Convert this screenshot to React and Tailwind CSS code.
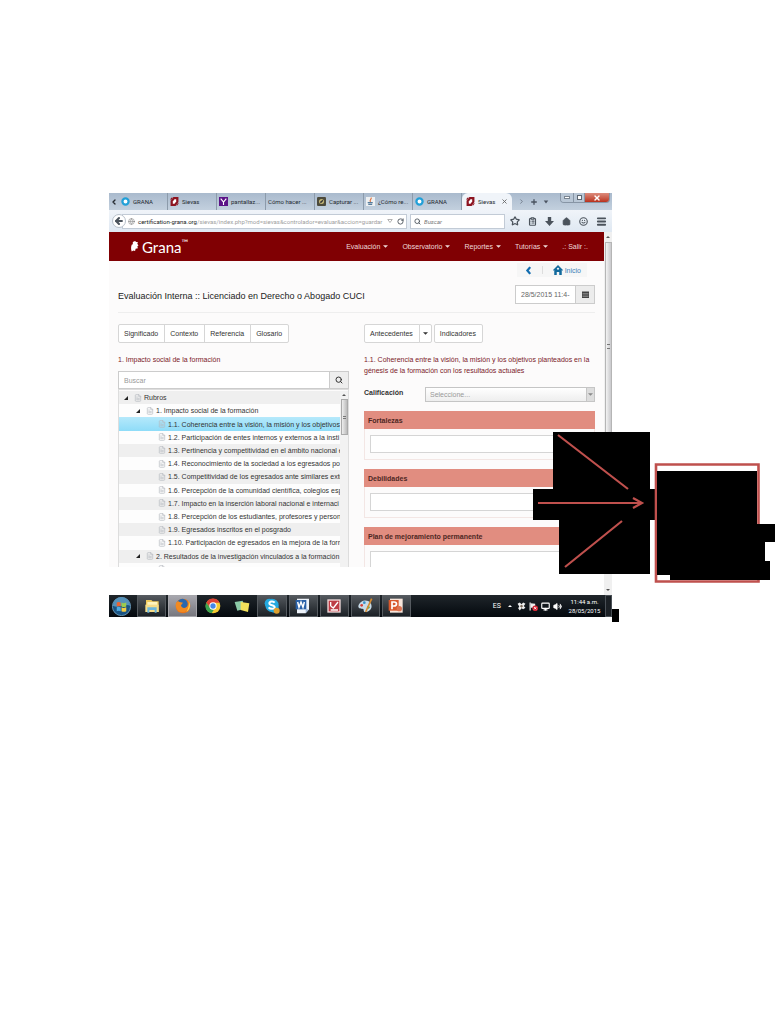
import React from "react";
import { Star, ClipboardList, House, Smile, Menu, ArrowLeft, Globe, Search, FileText, ChevronLeft, ChevronRight, Plus, X, RotateCw, Volume2, Monitor } from "lucide-react";

const ring = (
  <svg viewBox="0 0 16 16" className="size-[9px] shrink-0"><circle cx="8" cy="8" r="5.5" fill="#fff" stroke="#22a0d8" strokeWidth="4" /></svg>
);
const sievas = (
  <svg viewBox="0 0 16 16" className="size-[9px] shrink-0">
    <path d="M6 0h9v9l-5 7H1V7z" fill="#8d1420" />
    <path d="M8 4h3v4l-3 4H5V8z" fill="#fff" />
    <path d="M1 3l3-3v3L1 6zM15 12l-3 4v-3l3-3z" fill="#8d1420" />
  </svg>
);
const yahoo = (
  <svg viewBox="0 0 16 16" className="size-[9px] shrink-0"><path d="M0 0h16v16H0z" fill="#5b1287" /><path d="M3 3l5 6 5-6M8 9v5" stroke="#fff" strokeWidth="2" fill="none" /></svg>
);
const capture = (
  <svg viewBox="0 0 16 16" className="size-[9px] shrink-0"><rect width="16" height="16" rx="2" fill="#4c4a3c" /><circle cx="8" cy="8" r="4.5" fill="#c5b777" /><path d="M5 9l5-4 1 2-4 4z" fill="#333" /></svg>
);
const java = (
  <svg viewBox="0 0 16 16" className="size-[9px] shrink-0"><path d="M0 0h16v16H0z" fill="#edf0f2" /><path d="M9 1c2 3-4 4-1 8" stroke="#dc713e" strokeWidth="2" fill="none" /><path d="M3 10h9M4 13h7" stroke="#577c9c" strokeWidth="2" /></svg>
);

const tabs = [
  [ring, "GRANA"],
  [sievas, "Sievas"],
  [yahoo, "pantallaz..."],
  [null, "Cómo hacer ..."],
  [capture, "Capturar ..."],
  [java, "¿Cómo re..."],
  [ring, "GRANA"],
];

function TabStrip() {
  return (
    <div className="flex h-[17px] items-stretch bg-linear-to-b from-[#a9bacd] to-[#c3d0de] text-[#252a30]">
      <button aria-label="Pestañas anteriores" className="flex w-2.5 items-center justify-center"><ChevronLeft className="size-2" strokeWidth={4} /></button>
      {tabs.map(([icon, label], i) => (
        <button key={i} className="flex w-[49px] items-center gap-[3px] border-r border-[#8c9bab] pl-[2px] whitespace-nowrap">
          {icon}<span>{label}</span>
        </button>
      ))}
      <button className="flex w-[50px] items-center gap-[3px] rounded-t-md bg-[#f0f4f9] pl-1">
        {sievas}<span className="grow text-left">Sievas</span><X className="mr-1 size-[7px] text-[#666]" strokeWidth={3} />
      </button>
      <div className="flex grow items-center gap-[5px] pl-[6px] text-[#4a5360]">
        <ChevronRight className="size-[7px]" /><Plus className="size-2" strokeWidth={4} />
        <svg viewBox="0 0 8 8" className="size-[6px]"><path d="M1 2h6L4 6z" fill="currentColor" /></svg>
      </div>
      <div className="mr-[2px] flex h-2.5 w-[50px] shrink-0 overflow-hidden rounded-b-sm border border-t-0 border-[#8795a5] text-white">
        <button aria-label="Minimizar" className="flex w-3 items-center justify-center bg-[#b9c7d6]"><span className="h-[3px] w-[6px] border border-[#7a8591] bg-white" /></button>
        <button aria-label="Restaurar" className="flex w-3 items-center justify-center border-x border-[#8795a5] bg-[#b9c7d6]"><span className="size-[5px] border border-[#5d6873] bg-white" /></button>
        <button aria-label="Cerrar" className="flex grow items-center justify-center bg-linear-to-b from-[#dc8b7c] to-[#b9301c]"><X className="size-2" strokeWidth={4} /></button>
      </div>
    </div>
  );
}

function Toolbar() {
  return (
    <div className="flex h-[22px] items-center bg-linear-to-b from-[#f0f4f9] to-[#dfe8f2] pr-[5px] pl-[3px] text-[#4b535c]">
      <button aria-label="Atrás" className="z-10 flex size-[14px] shrink-0 items-center justify-center rounded-full border border-[#b7c0ca] bg-white"><ArrowLeft className="size-[10px]" strokeWidth={5} /></button>
      <div className="-ml-1 flex h-[15px] min-w-0 grow items-center border border-[#c2cbd6] bg-white pl-[5px]">
        <Globe className="mr-[3px] size-[7px] shrink-0 text-[#888]" />
        <span className="grow whitespace-nowrap text-[#a0a0a0]"><b className="font-normal text-[#222]">certification-grana.org</b>/sievas/index.php?mod=sievas&amp;controlador=evaluar&amp;accion=guardar</span>
        <svg viewBox="0 0 8 8" className="mr-1 size-[6px] shrink-0"><path d="M1 2h6L4 6z" fill="none" stroke="#999" /></svg>
        <RotateCw className="mr-[2px] size-[7px] shrink-0" strokeWidth={3} />
      </div>
      <label className="ml-[3px] flex h-[15px] w-[95px] shrink-0 items-center gap-[3px] border border-[#c2cbd6] bg-white pl-[3px]">
        <Search className="size-[7px] shrink-0" strokeWidth={3} />
        <input aria-label="Buscar en la web" placeholder="Buscar" className="w-full italic outline-none placeholder:text-[#777]" />
      </label>
      <div className="flex w-[102px] shrink-0 items-center justify-between pl-[5px]">
        <button aria-label="Marcador"><Star className="size-[10px]" strokeWidth={3} /></button>
        <button aria-label="Lista"><ClipboardList className="size-[9px]" strokeWidth={3} /></button>
        <button aria-label="Descargas"><svg viewBox="0 0 16 16" className="size-[9px]"><path d="M5 0h6v7h5l-8 9-8-9h5z" fill="currentColor" /></svg></button>
        <button aria-label="Página de inicio"><House className="size-[9px]" fill="currentColor" strokeWidth={2} /></button>
        <button aria-label="Chat"><Smile className="size-[9px]" strokeWidth={3} /></button>
        <button aria-label="Menú"><Menu className="size-[11px]" strokeWidth={4} /></button>
      </div>
    </div>
  );
}

const Caret = () => <svg viewBox="0 0 8 8" className="size-[5px]"><path d="M0 2h8L4 6z" fill="currentColor" /></svg>;

function Navbar() {
  return (
    <header className="flex h-[29px] items-center bg-[#800003] pr-4 pl-[21px] text-[#eed9d9]">
      <a href="#grana" className="flex items-center gap-[3px] text-white">
        <svg viewBox="0 0 16 22" className="h-[13px] w-[9px]"><path d="M9 1l2 2 3 0-1 3 2 3-2 2 1 3-4 1-1 4-3-1-3 2-1-4 0-4 1-4 2-1 0-4z" fill="#fff" /></svg>
        <span className="flex font-[Lato,sans-serif] text-[15px] leading-[18px]">Grana<span className="text-[9px] leading-[10px]">™</span></span>
      </a>
      <nav className="ml-auto flex items-center gap-[14px]">
        {["Evaluación", "Observatorio", "Reportes", "Tutorías"].map((t) => (
          <button key={t} className="flex items-center gap-[3px]">{t}<Caret /></button>
        ))}
        <a href="#salir">.: Salir :.</a>
      </nav>
    </header>
  );
}

const rows = [
  [0, "Rubros"],
  [1, "1. Impacto social de la formación"],
  [2, "1.1. Coherencia entre la visión, la misión y los objetivos"],
  [2, "1.2. Participación de entes internos y externos a la insti"],
  [2, "1.3. Pertinencia y competitividad en el ámbito nacional e"],
  [2, "1.4. Reconocimiento de la sociedad a los egresados po"],
  [2, "1.5. Competitividad de los egresados ante similares exte"],
  [2, "1.6. Percepción de la comunidad científica, colegios esp"],
  [2, "1.7. Impacto en la inserción laboral nacional e internaci"],
  [2, "1.8. Percepción de los estudiantes, profesores y person"],
  [2, "1.9. Egresados inscritos en el posgrado"],
  [2, "1.10. Participación de egresados en la mejora de la form"],
  [1, "2. Resultados de la investigación vinculados a la formación"],
  [2, "2.1. Distintos avances y productos científicos de los"],
];
const indent = ["pl-[5px]", "pl-[17px]", "pl-[39px]"];

function Tree() {
  return (
    <div className="flex h-[178px] overflow-hidden border-x border-t border-[#ddd] pt-px">
      <ul className="grid h-[185px] min-w-0 grow auto-rows-fr">
        {rows.map(([level, label], i) => (
          <li key={label} className={`flex min-w-0 items-center whitespace-nowrap ${indent[level]} ${i === 2 ? "bg-linear-to-b from-[#b5e9fb] to-[#8edcf8]" : i % 2 ? "bg-[#fdfdfd]" : "bg-[#efefef]"}`}>
            {level < 2 && <svg viewBox="0 0 8 8" className="mr-[6px] size-1 shrink-0"><path d="M8 0v8H0z" fill="#222" /></svg>}
            <FileText className="mr-[2px] size-2 shrink-0 text-[#b5babf]" strokeWidth={2} />
            <span>{label}</span>
          </li>
        ))}
      </ul>
      <div className="z-10 flex w-2 shrink-0 flex-col items-center bg-[#f2f2f2]">
        <svg viewBox="0 0 8 8" className="my-[2px] size-1"><path d="M0 6h8L4 2z" fill="#555" /></svg>
        <div className="flex h-[36px] w-[7px] items-center justify-center border border-[#aaa] bg-linear-to-r from-[#eee] to-[#bbb]"><span className="h-[3px] w-[3px] border-y border-[#777]" /></div>
      </div>
    </div>
  );
}

function Panel({ title }) {
  return (
    <section className="mb-[9px] border border-[#f3e6e4]">
      <h3 className="-mx-px -mt-px flex h-[18px] items-center bg-[#e18d80] pl-1 font-bold text-[#4d2723]">{title}</h3>
      <div className="px-[5px] py-[6px]">
        <textarea aria-label={title} className="block h-[18px] w-full resize-none border border-[#d5d5d5] bg-white outline-none" />
      </div>
    </section>
  );
}

const group = "flex h-[19px] items-center border border-[#d6d6d6] bg-white pl-[5px] pr-[6px]";

function Page() {
  return (
    <main className="h-[306px] overflow-hidden bg-[#fcfbfb] px-[9px] pt-[2px]">
      <div className="mr-2 flex justify-end">
        <nav className="flex h-[14px] w-[70px] items-center justify-between bg-[#f6f6f6] pr-[6px] pl-[8px] text-[#3c82b8]">
          <a href="#atras" aria-label="Regresar"><svg viewBox="0 0 10 16" className="h-[9px] w-[7px]"><path d="M8 2L3 8l5 6" stroke="#126db0" strokeWidth="4" fill="none" /></svg></a>
          <span className="h-2 w-px bg-[#ddd]" />
          <a href="#inicio" className="flex items-center gap-[2px]">
            <svg viewBox="0 0 16 16" className="size-2.5"><path d="M8 0l8 8-1 1-1-1v8h-4v-5H6v5H2V8L1 9 0 8z" fill="#126a9d" /><path d="M8 4l2 2-2 2-2-2z" fill="#fff" /></svg>Inicio
          </a>
        </nav>
      </div>
      <div className="mt-2 flex h-[28px] items-start justify-between border-b border-[#eee]">
        <h1 className="pt-[5px] text-[9px] leading-[13px] text-[#222]">Evaluación Interna :: Licenciado en Derecho o Abogado CUCI</h1>
        <div className="flex h-[19px] w-20 border border-[#ccc] bg-white text-[#666]">
          <input aria-label="Fecha" defaultValue="28/5/2015 11:4-" className="w-[59px] pl-[5px] outline-none" />
          <button aria-label="Calendario" className="flex grow items-center justify-center border-l border-[#ccc] bg-[#ececec]">
            <svg viewBox="0 0 14 14" className="size-[7px]"><path d="M0 1h14v13H0z" fill="#444" /><path d="M1 5h12M1 8h12M1 11h12" stroke="#bbb" /></svg>
          </button>
        </div>
      </div>
      <div className="grid grid-cols-2 gap-[15px] pt-[11px]">
        <div className="min-w-0">
          <div className="flex">
            {["Significado", "Contexto", "Referencia", "Glosario"].map((t) => (
              <button key={t} className={`${group} -mr-px first:rounded-l-[2px] last:rounded-r-[2px]`}>{t}</button>
            ))}
          </div>
          <h2 className="mt-[11px] leading-[11px] text-[#7b2029]">1. Impacto social de la formación</h2>
          <div className="mt-[6px] flex h-[18px] border border-[#ccc] bg-white">
            <input aria-label="Buscar rubro" placeholder="Buscar" className="min-w-0 grow pl-[5px] outline-none placeholder:text-[#999]" />
            <button aria-label="Buscar" className="flex w-[19px] items-center justify-center border-l border-[#ccc] bg-[#eee]"><Search className="size-2" strokeWidth={3} /></button>
          </div>
          <Tree />
        </div>
        <div className="min-w-0">
          <div className="flex">
            <button className={`${group} rounded-l-[2px]`}>Antecedentes</button>
            <button aria-label="Más antecedentes" className="-ml-px flex h-[19px] w-[13px] items-center justify-center rounded-r-[2px] border border-[#d6d6d6] bg-white"><Caret /></button>
            <button className={`${group} ml-[2px] rounded-[2px]`}>Indicadores</button>
          </div>
          <h2 className="mt-[11px] leading-[11px] text-[#7b2029]">1.1. Coherencia entre la visión, la misión y los objetivos planteados en la génesis de la formación con los resultados actuales</h2>
          <div className="mt-[11px] flex h-[15px]">
            <label htmlFor="cal" className="w-[61px] leading-[11px] font-bold">Calificación</label>
            <div className="flex grow border border-[#c5c5c5] bg-linear-to-b from-white to-[#eee]">
              <select id="cal" className="grow appearance-none pl-1 text-[#999] outline-none"><option>Seleccione...</option></select>
              <span className="flex w-2 items-center justify-center border-l border-[#c5c5c5] bg-[#ddd] text-[#888]"><Caret /></span>
            </div>
          </div>
          <div className="pt-[9px]">
            <Panel title="Fortalezas" /><Panel title="Debilidades" /><Panel title="Plan de mejoramiento permanente" />
          </div>
        </div>
      </div>
    </main>
  );
}

const apps = [
  ["Explorador", true, <><path d="M3 3h8l2 2h9v16H3z" fill="#eec95c" /><path d="M5 6h15v6H5z" fill="#fff4bd" /><path d="M2 10h20v11H2z" fill="#f6dd89" /><path d="M5 14h14v8h-3v-4H8v4H5z" fill="#6cb6dc" /></>],
  ["Firefox", true, <><circle cx="12" cy="12" r="11" fill="#e8751a" /><circle cx="11" cy="9" r="8" fill="#2868ae" /><path d="M1 9c2-5 4-5 6-3l5 1-3 4c1 5 7 6 11 0l2-6c5 17-21 24-21 4z" fill="#f18a21" /><path d="M20 4c4 6 3 13-3 17 3-6 5-10 3-17z" fill="#ffd24a" /></>],
  ["Chrome", false, <><circle cx="12" cy="12" r="11" fill="#f5ca31" /><path d="M2 7a11 11 0 0 1 20 0H12L7 14z" fill="#de4235" /><path d="M2 7l6 8 5 3-3 5C1 21-1 13 2 7z" fill="#3da450" /><circle cx="12" cy="12" r="5.5" fill="#fff" /><circle cx="12" cy="12" r="4" fill="#4387e8" /></>],
  ["Notas", false, <><path d="M1 6l12-2 3 12-11 3z" fill="#8bcaa7" /><path d="M10 6l13 2-2 13-11-3z" fill="#f2e15b" /></>],
  ["Skype", true, <><circle cx="8" cy="8" r="7" fill="#24a9df" /><circle cx="15" cy="15" r="7" fill="#24a9df" /><circle cx="12" cy="11" r="10" fill="#24a9df" /><path d="M16 7c-2-3-8-2-8 1 0 4 8 2 8 6 0 3-7 3-9 0" stroke="#fff" strokeWidth="3" fill="none" /><circle cx="19" cy="19" r="4.5" fill="#dda130" /></>],
  ["Word", true, <><path d="M3 1h18v16l-5 6H3z" fill="#eef3fa" /><path d="M16 23v-6h5z" fill="#9fb8d8" /><path d="M1 3h16v14H1z" fill="#2a61a8" /><path d="M4 6l2 8 3-8 3 8 2-8" stroke="#fff" strokeWidth="2.2" fill="none" /></>],
  ["Firma", true, <><path d="M2 2h20v20H2z" fill="#f2dcdc" /><path d="M4 4h16v16H4z" fill="#bd3c46" /><path d="M7 6v6M7 12l4 3 7-9M7 18h11" stroke="#fff" strokeWidth="2" fill="none" /></>],
  ["Paint", true, <><path d="M2 12C4 4 15 1 20 7c5 7-1 14-7 14-5 0-1-5-5-5-3 0-6 0-6-4z" fill="#c7dbe8" /><circle cx="7" cy="11" r="2" fill="#d94037" /><circle cx="11" cy="7" r="2" fill="#388fc6" /><circle cx="17" cy="14" r="2" fill="#52a84c" /><path d="M22 1l-9 20" stroke="#d68b30" strokeWidth="2.5" /></>],
  ["PowerPoint", true, <><path d="M3 1h19v21H3z" fill="#f8e6dc" /><path d="M1 3h15v16H1z" fill="#d9582c" /><path d="M6 17V6h3c5 0 5 6 0 6H6" stroke="#fff" strokeWidth="2.5" fill="none" /><circle cx="17" cy="16" r="4" fill="#dc7250" /></>],
];

function Taskbar() {
  return (
    <footer className="flex h-[22px] items-stretch bg-linear-to-b from-[#20262b] to-[#05090e] font-[Roboto,sans-serif] text-[6px] text-white">
      <button aria-label="Inicio de Windows" className="flex w-[28px] items-center justify-center pr-1">
        <svg viewBox="0 0 24 24" className="size-[19px]">
          <circle cx="12" cy="12" r="11.5" fill="#195383" stroke="#79aac9" />
          <path d="M1 11a11 11 0 0 1 22 0c-7-3-14 4-22 0z" fill="#5691b9" />
          <path d="M6 7c2-1 3-1 5 0v5c-2-1-3-1-5 0z" fill="#ed6430" /><path d="M12 7c2 1 3 1 6 0v5c-2 1-4 1-6 0z" fill="#9dcc4c" />
          <path d="M6 13c2-1 3-1 5 0v5c-2-1-3-1-5 0z" fill="#4eaae0" /><path d="M12 13c2 1 3 1 6 0v5c-2 1-4 1-6 0z" fill="#f5cc43" />
        </svg>
      </button>
      <div className="flex w-[274px] shrink-0 gap-[2px]">
        {apps.map(([name, open, art]) => (
          <button key={name} aria-label={name} className={`flex flex-1 items-center justify-center ${name === "Firefox" ? "border border-[#a6a6ab] bg-linear-to-b from-[#a7a7ae] to-[#77777e]" : open ? "border border-[#565b60] bg-linear-to-b from-[#53585d] to-[#1c2126]" : ""}`}>
            <svg viewBox="0 0 24 24" className="size-4">{art}</svg>
          </button>
        ))}
      </div>
      <div className="flex grow items-center justify-end gap-[3px]">
        <span className="mr-1 text-[7px]">ES</span>
        <svg viewBox="0 0 8 8" className="mr-[2px] size-1"><path d="M0 6h8L4 2z" fill="#fff" /></svg>
        <svg viewBox="0 0 16 16" className="size-[9px]"><path d="M1 3l4-2 3 3 3-3 4 2-3 4 3 3-4 3-3-2-3 4-3-4 2-3z" fill="#eee" /><path d="M8 5l3 2-3 3-3-3z" fill="#765" /></svg>
        <svg viewBox="0 0 16 16" className="size-[9px]"><path d="M2 1v14" stroke="#fff" strokeWidth="2" /><path d="M3 2l8 1v7H3z" fill="#eee" /><circle cx="11" cy="11" r="5" fill="#d32635" /><path d="M9 9l4 4m0-4l-4 4" stroke="#fff" strokeWidth="1.5" /></svg>
        <Monitor className="size-[9px]" strokeWidth={3} />
        <Volume2 className="size-[9px]" fill="#fff" strokeWidth={2} />
      </div>
      <div className="ml-1 w-[37px] shrink-0 self-center text-center leading-[9px]">11:44 a.m.<br />28/05/2015</div>
      <button aria-label="Mostrar escritorio" className="ml-[2px] w-[7px] shrink-0 border border-[#4a5056] bg-[#1b2025]" />
    </footer>
  );
}

function Annotation() {
  return (
    <svg viewBox="0 0 250 195" className="pointer-events-none absolute top-[235px] left-[422px] z-20 h-[195px] w-[250px]" aria-hidden="true">
      <path d="M22 4h97v57h5v31h-5v54H28V92H2V61h20z" fill="#000" />
      <g stroke="#bf504d" strokeWidth="2.2" fill="none">
        <path d="M27 7l70 54M34 139l57-46M7 75h103M102 70l9 5-9 5" />
      </g>
      <path d="M125 36.5h102.500v117H125z" fill="#fff" stroke="#bf504d" strokeWidth="2.6" />
      <path d="M126 43h100v53h18v18h-10v19h5v19H139v-5h-13z" fill="#000" />
      <path d="M81 181h7v13h-7z" fill="#000" />
    </svg>
  );
}

export default function App() {
  return (
    <div className="min-h-screen bg-white pt-[193px] pr-[169px] pl-[109px] font-['Liberation_Sans',sans-serif] text-[7px] leading-[11px] text-[#333]">
      <div className="relative">
        <div className="font-[Roboto,sans-serif] text-[6px]">
          <TabStrip />
          <Toolbar />
        </div>
        <div className="flex">
          <div className="min-w-0 grow pb-7"><Navbar /><Page /></div>
          <div className="flex w-2 shrink-0 flex-col items-center justify-between bg-[#f0f0f0] text-[#555]">
            <svg viewBox="0 0 8 8" className="my-[3px] size-1"><path d="M0 6h8L4 2z" fill="currentColor" /></svg>
            <div className="mb-auto flex h-[208px] w-[7px] items-center justify-center border border-[#b5b5b5] bg-linear-to-r from-[#f3f3f3] to-[#c9c9cc]"><span className="h-[5px] w-[3px] border-y border-[#777]" /></div>
            <svg viewBox="0 0 8 8" className="my-[3px] size-1"><path d="M0 2h8L4 6z" fill="currentColor" /></svg>
          </div>
        </div>
        <Taskbar />
        <Annotation />
      </div>
    </div>
  );
}
